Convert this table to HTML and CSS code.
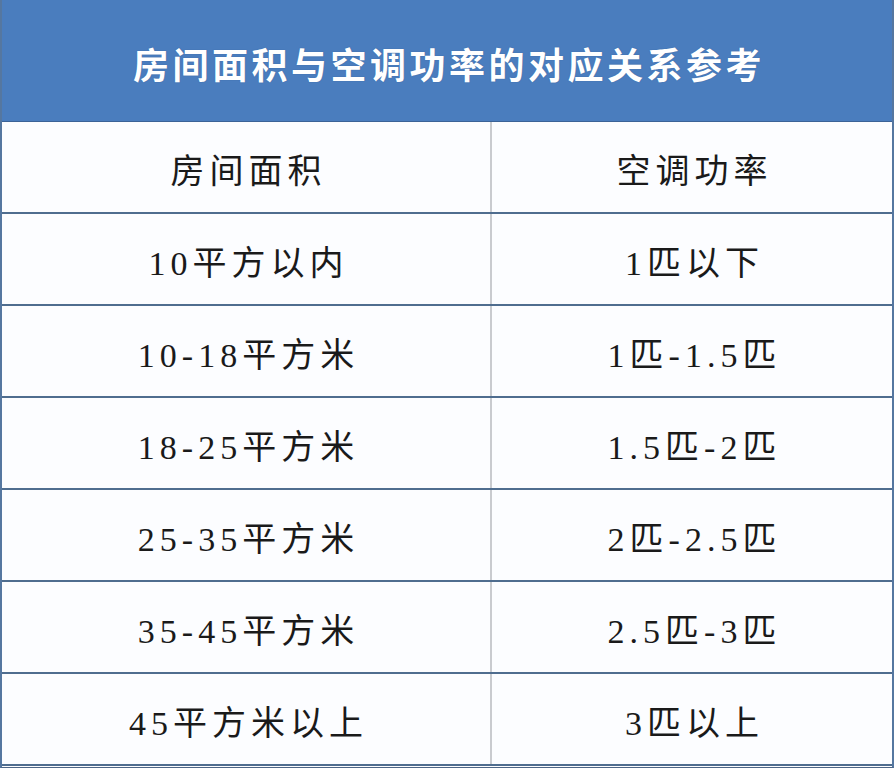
FILE: index.html
```html
<!DOCTYPE html>
<html lang="zh">
<head>
<meta charset="utf-8">
<title>房间面积与空调功率的对应关系参考</title>
<link rel="stylesheet" href="styles.css">
</head>
<body>
<div class="table">
  <div class="title">房间面积与空调功率的对应关系参考</div>
  <div class="row"><div class="cell">房间面积</div><div class="cell">空调功率</div></div>
  <div class="row"><div class="cell">10平方以内</div><div class="cell">1匹以下</div></div>
  <div class="row"><div class="cell">10-18平方米</div><div class="cell">1匹-1.5匹</div></div>
  <div class="row"><div class="cell">18-25平方米</div><div class="cell">1.5匹-2匹</div></div>
  <div class="row"><div class="cell">25-35平方米</div><div class="cell">2匹-2.5匹</div></div>
  <div class="row"><div class="cell">35-45平方米</div><div class="cell">2.5匹-3匹</div></div>
  <div class="row"><div class="cell">45平方米以上</div><div class="cell">3匹以上</div></div>
</div>
</body>
</html>
```
FILE: styles.css
```css
html, body {
  margin: 0;
  padding: 0;
  background: #ffffff;
}
.table {
  width: 894px;
  height: 768px;
  box-sizing: border-box;
  border-left: 2px solid #5577a0;
  border-right: 2px solid #5577a0;
  border-bottom: 1px solid #4d6585;
  display: flex;
  flex-direction: column;
  background: #fcfdff;
}
.title {
  height: 122px;
  box-sizing: border-box;
  border-bottom: 1px solid #3b6397;
  background: #4a7dbe;
  color: #ffffff;
  font-family: "Noto Sans CJK SC", sans-serif;
  font-weight: 700;
  font-size: 36px;
  letter-spacing: 3.5px;
  display: flex;
  align-items: center;
  justify-content: center;
  padding-top: 4px;
  padding-left: 4px;
  text-shadow: 0 0 1px rgba(30, 60, 110, 0.5);
}
.row {
  height: 92px;
  box-sizing: border-box;
  border-bottom: 2px solid #4f6d8f;
  display: grid;
  grid-template-columns: 488px 1fr;
}
.cell {
  display: flex;
  align-items: center;
  justify-content: center;
  font-family: "Liberation Serif", "Noto Sans CJK SC", serif;
  font-weight: 400;
  font-size: 34px;
  letter-spacing: 5px;
  color: #1a1a1a;
  padding-top: 2px;
  padding-left: 5px;
}
.cell + .cell {
  border-left: 2px solid #c9cbcf;
}
```
